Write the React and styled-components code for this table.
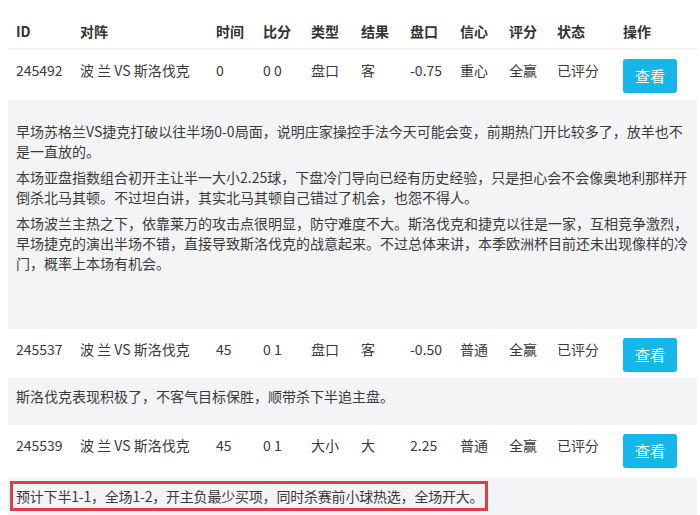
import styled, { createGlobalStyle } from "styled-components"

const GlobalStyle = createGlobalStyle`
body {
    margin: 8px 3px 0 8px;
    background: #fff;
    overflow: hidden;
    font-family: "Noto Sans CJK SC", "Noto Sans", sans-serif;
    color: #333;
}
`

const COLS = "64px 136px 47px 48px 50px 49px 50px 49px 48px 66px 1fr"

const Tabela = styled.div`
display: flex;
flex-direction: column;
`

const Cabecalho = styled.div`
display: grid;
grid-template-columns: ${COLS};
padding: 13px 0 7px;
border-bottom: 2px solid #f1f1f3;
`

const Titulo = styled.div`
padding: 0 8px;
font-size: 14px;
font-weight: bold;
line-height: 20px;
color: #333;
white-space: nowrap;
`

const Linha = styled.div`
display: grid;
grid-template-columns: ${COLS};
align-items: start;
height: ${props => props.$h || 50}px;
box-sizing: border-box;
padding-top: 9px;
background: #fff;
`

const Celula = styled.div`
padding: 0 8px;
margin-top: 1px;
font-size: 14px;
line-height: 20px;
color: #3a3a3a;
white-space: nowrap;
`

const Botao = styled.button`
margin-left: 8px;
width: 54px;
height: 34px;
border: none;
border-radius: 3px;
background: #15b7e8;
color: #fff;
font-family: "Noto Sans CJK SC", sans-serif;
font-size: 15px;
line-height: 34px;
padding: 0;
`

const Nota = styled.div`
background: #f4f4f6;
padding: ${props => props.$pad};
height: ${props => props.$h}px;
box-sizing: border-box;
`

const Paragrafo = styled.p`
margin: 0 0 6px;
font-size: 14px;
line-height: 20px;
color: #3a3a3a;
white-space: nowrap;
`

const Linhatexto = styled.span`
display: block;
`

const Destaque = styled.span`
display: inline-block;
border: 3px solid #d8404a;
padding: 2px 2px 2px 3px;
font-size: 14px;
line-height: 20px;
letter-spacing: -0.2px;
color: #3a3a3a;
white-space: nowrap;
`

const titulos = ["ID", "对阵", "时间", "比分", "类型", "结果", "盘口", "信心", "评分", "状态", "操作"]

const jogos = [
    { id: "245492", tempo: "0", placar: "0 0", tipo: "盘口", res: "客", linha: "-0.75", conf: "重心" },
    { id: "245537", tempo: "45", placar: "0 1", tipo: "盘口", res: "客", linha: "-0.50", conf: "普通" },
    { id: "245539", tempo: "45", placar: "0 1", tipo: "大小", res: "大", linha: "2.25", conf: "普通" },
]

const paragrafos = [
    ["早场苏格兰VS捷克打破以往半场0-0局面，说明庄家操控手法今天可能会变，前期热门开比较多了，放羊也不", "是一直放的。"],
    ["本场亚盘指数组合初开主让半一大小2.25球，下盘冷门导向已经有历史经验，只是担心会不会像奥地利那样开", "倒杀北马其顿。不过坦白讲，其实北马其顿自己错过了机会，也怨不得人。"],
    ["本场波兰主热之下，依靠莱万的攻击点很明显，防守难度不大。斯洛伐克和捷克以往是一家，互相竞争激烈，", "早场捷克的演出半场不错，直接导致斯洛伐克的战意起来。不过总体来讲，本季欧洲杯目前还未出现像样的冷", "门，概率上本场有机会。"],
]

function LinhaJogo({ jogo, h }) {
    return (
        <Linha $h={h}>
            <Celula>{jogo.id}</Celula>
            <Celula>波 兰 VS 斯洛伐克</Celula>
            <Celula>{jogo.tempo}</Celula>
            <Celula>{jogo.placar}</Celula>
            <Celula>{jogo.tipo}</Celula>
            <Celula>{jogo.res}</Celula>
            <Celula>{jogo.linha}</Celula>
            <Celula>{jogo.conf}</Celula>
            <Celula>全赢</Celula>
            <Celula>已评分</Celula>
            <div><Botao>查看</Botao></div>
        </Linha>
    )
}

function App() {
    return (
        <>
            <GlobalStyle />
            <Tabela>
                <Cabecalho>
                    {titulos.map(t => <Titulo key={t}>{t}</Titulo>)}
                </Cabecalho>
                <LinhaJogo jogo={jogos[0]} h={50} />
                <Nota $pad="21px 8px 0" $h={229}>
                    {paragrafos.map((p, i) => (
                        <Paragrafo key={i}>
                            {p.map(l => <Linhatexto key={l}>{l}</Linhatexto>)}
                        </Paragrafo>
                    ))}
                </Nota>
                <LinhaJogo jogo={jogos[1]} h={49} />
                <Nota $pad="8px 8px 0" $h={47}>
                    <Paragrafo>斯洛伐克表现积极了，不客气目标保胜，顺带杀下半追主盘。</Paragrafo>
                </Nota>
                <LinhaJogo jogo={jogos[2]} h={52} />
                <Nota $pad="4px 2px 0" $h={60}>
                    <Destaque>预计下半1-1，全场1-2，开主负最少买项，同时杀赛前小球热选，全场开大。</Destaque>
                </Nota>
            </Tabela>
        </>
    )
}

export default App
